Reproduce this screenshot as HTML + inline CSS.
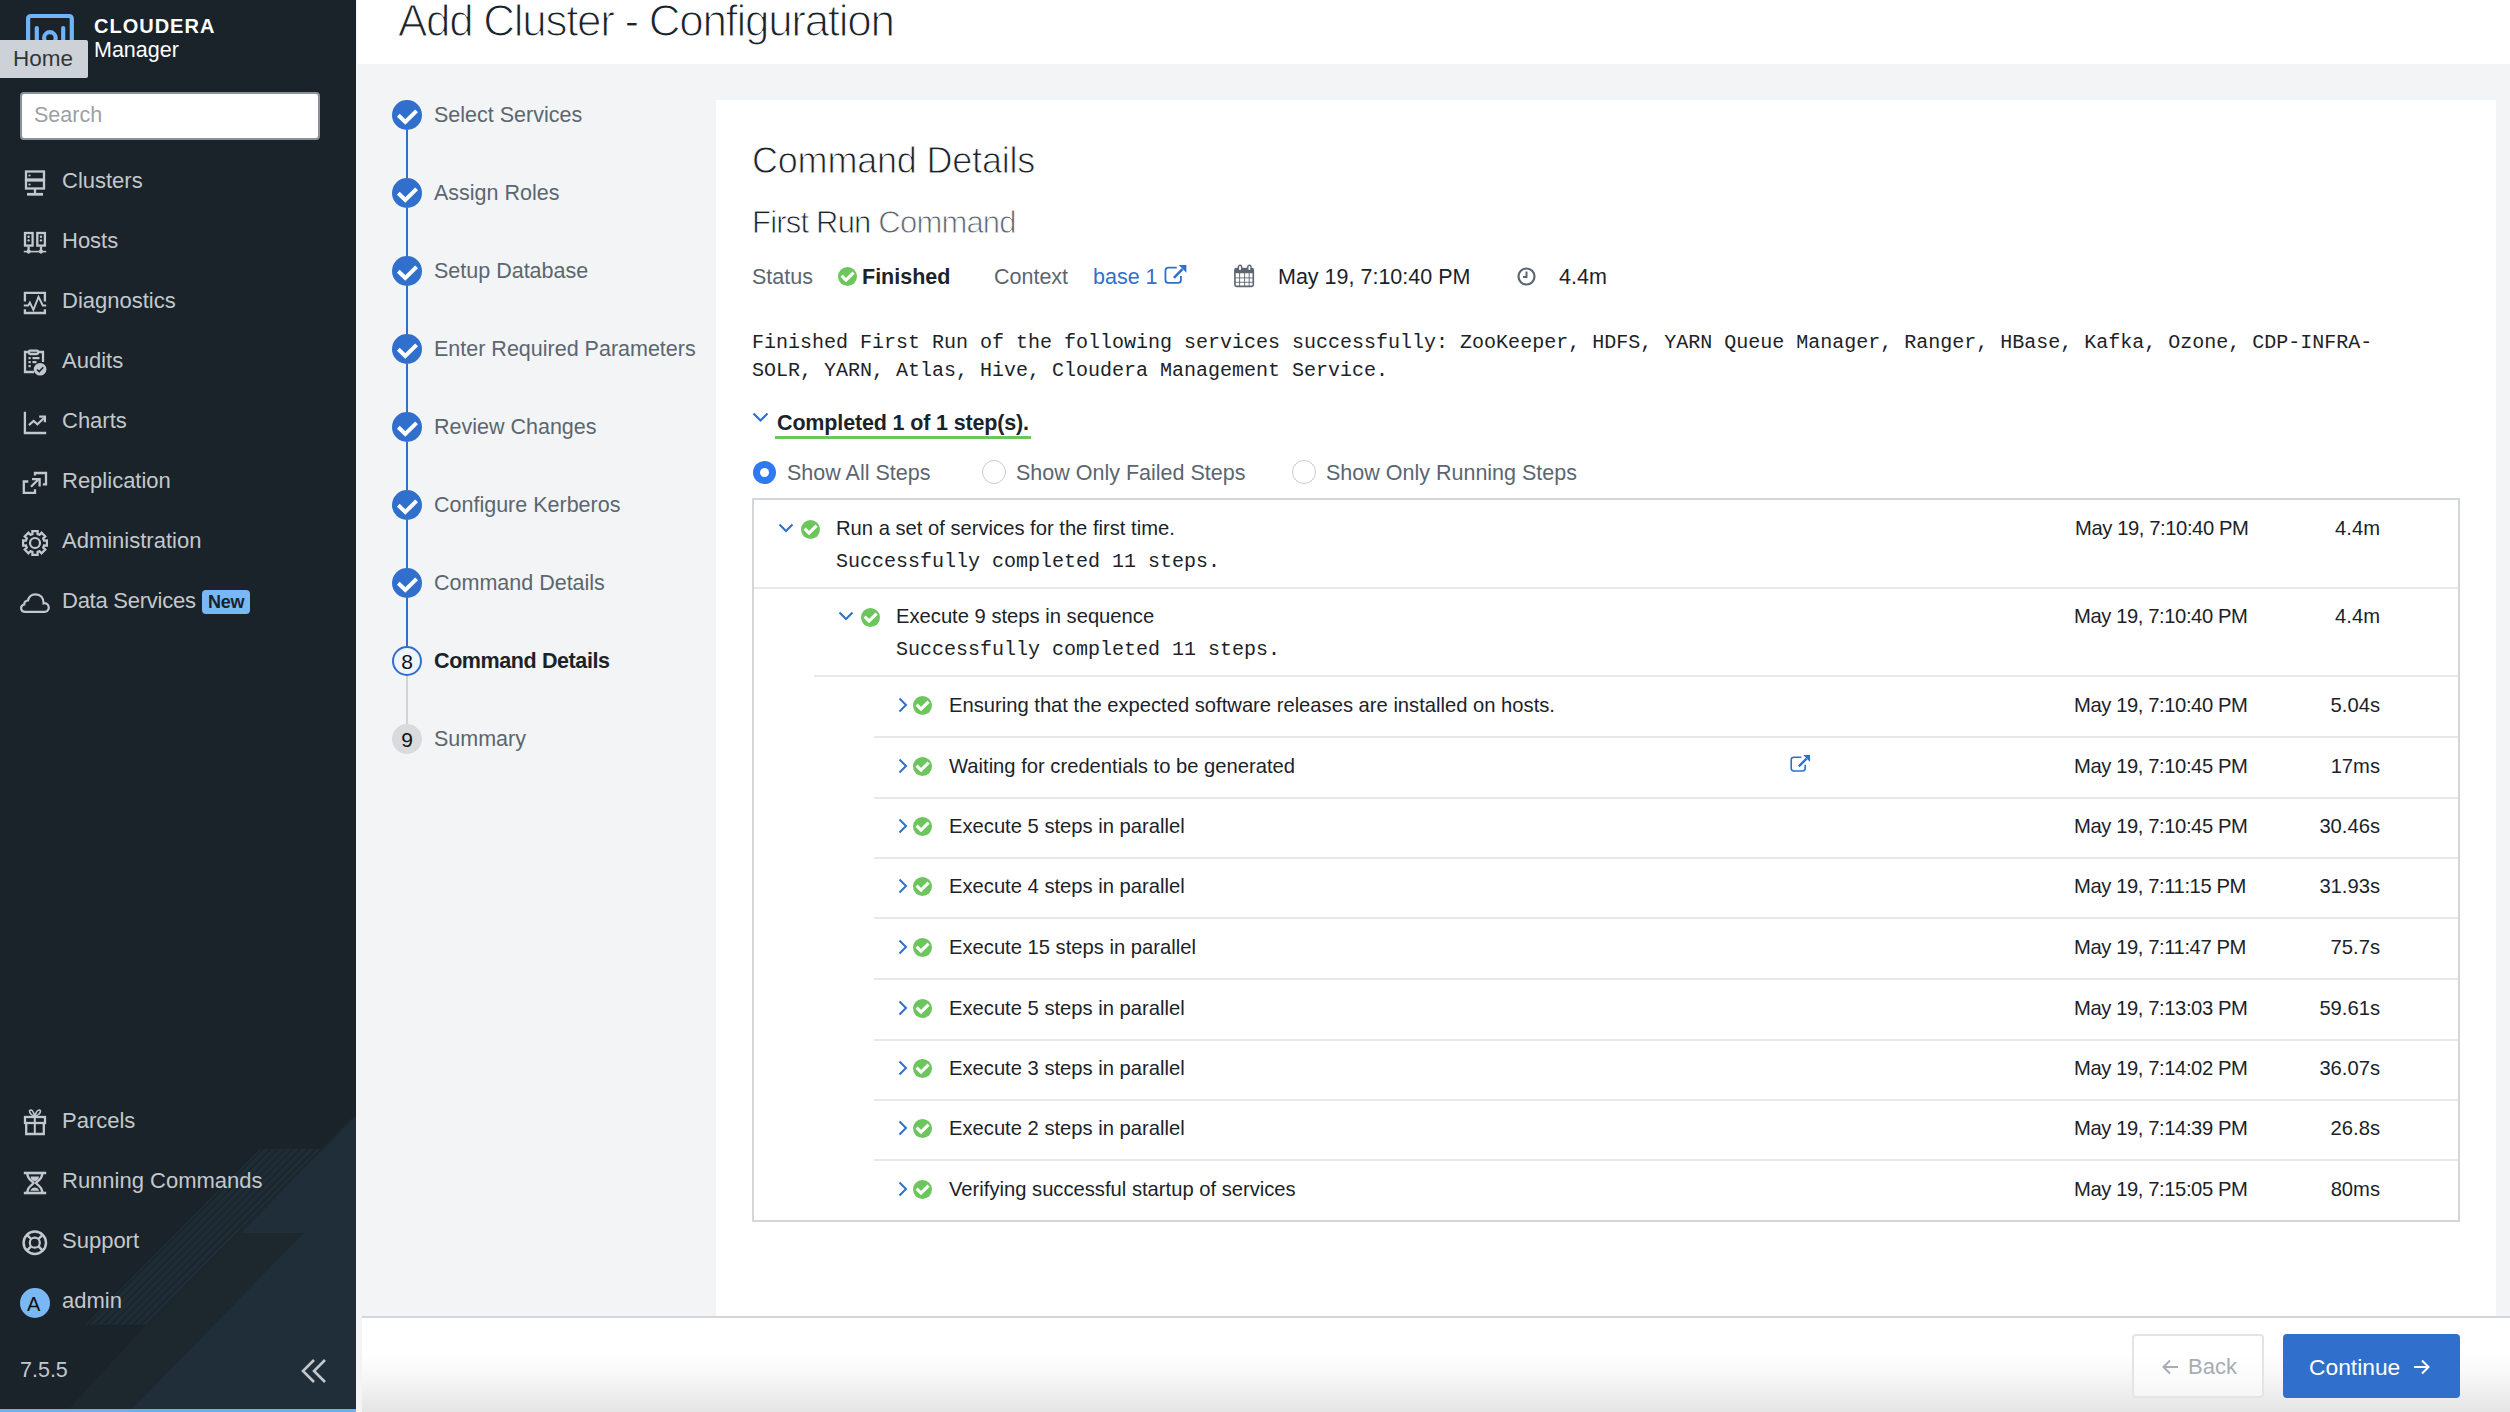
<!DOCTYPE html>
<html><head><meta charset="utf-8">
<style>
*{box-sizing:border-box;margin:0;padding:0}
html,body{width:2510px;height:1412px;overflow:hidden;background:#f3f4f5;font-family:"Liberation Sans",sans-serif;}
.p{position:absolute;white-space:nowrap;line-height:1}
#sb{position:absolute;left:0;top:0;width:356px;height:1412px;background:#1a2329;overflow:hidden}
.nt{position:absolute;left:62px;font-size:22px;color:#c3c8cd;white-space:nowrap;line-height:1}
.ic{position:absolute;overflow:visible}
.sl{position:absolute;left:434px;font-size:21.5px;color:#5b6670;white-space:nowrap;line-height:1}
.mono{font-family:"Liberation Mono",monospace;font-size:20px;color:#1b2329;white-space:nowrap;position:absolute;line-height:1}
.rt{position:absolute;font-size:20.2px;color:#1b2329;white-space:nowrap;line-height:1}
.sep{position:absolute;height:2px;background:#e6e8ea}
</style></head><body>

<div id="sb">
<svg class="ic" style="left:0;top:0" width="356" height="1412" viewBox="0 0 356 1412">
<polygon points="320.6,1149 356,1113.6 356,1412 66,1412 145.9,1324.7" fill="#1c272e"/>
<polygon points="356,1116 240.7,1232.9 303.6,1232.9 128.9,1412 356,1412" fill="#1f2e38"/>
<polygon points="259.7,1149 320.6,1149 145.9,1324.7 85,1324.7" fill="#1f2c35"/>
<g stroke="#1a242a" stroke-width="1.3">
<line x1="263" y1="1149" x2="88" y2="1324.7"/><line x1="270.5" y1="1149" x2="95.5" y2="1324.7"/><line x1="278" y1="1149" x2="103" y2="1324.7"/>
<line x1="285.5" y1="1149" x2="110.5" y2="1324.7"/><line x1="293" y1="1149" x2="118" y2="1324.7"/><line x1="300.5" y1="1149" x2="125.5" y2="1324.7"/>
<line x1="308" y1="1149" x2="133" y2="1324.7"/><line x1="315.5" y1="1149" x2="140.5" y2="1324.7"/>
</g>
</svg>
</div>
<svg class="ic" style="left:0;top:0" width="100" height="60" viewBox="0 0 100 60">
<path d="M28.1,40 V19 Q28.1,16 31.1,16 H68.8 Q71.8,16 71.8,19 V40" fill="none" stroke="#6fb3f8" stroke-width="4.2"/>
<line x1="36.8" y1="28" x2="36.8" y2="40" stroke="#6fb3f8" stroke-width="4.2" stroke-linecap="round"/>
<line x1="63.2" y1="28" x2="63.2" y2="40" stroke="#6fb3f8" stroke-width="4.2" stroke-linecap="round"/>
<circle cx="49.9" cy="38" r="5.8" fill="none" stroke="#6fb3f8" stroke-width="4.2"/>
</svg>
<div class="p" style="left:94px;top:16px;font-size:20px;font-weight:bold;color:#fff;letter-spacing:1px">CLOUDERA</div>
<div class="p" style="left:94px;top:39.5px;font-size:21.5px;color:#fff">Manager</div>
<div class="p" style="left:0;top:40px;width:88px;height:38px;background:#cdd2d8;border-radius:0 2px 2px 0"></div>
<div class="p" style="left:13px;top:48px;font-size:22.5px;color:#333638">Home</div>
<div class="p" style="left:20px;top:92px;width:300px;height:48px;background:#fff;border:2px solid #8a9198;border-radius:4px"></div>
<div class="p" style="left:34px;top:105px;font-size:21.5px;color:#9aa1a8">Search</div>
<svg class="ic" style="left:0;top:0" width="356" height="1412" viewBox="0 0 356 1412">
<g fill="none" stroke="#c3c8cd" stroke-width="2.3">
<!-- clusters -->
<rect x="26" y="171.5" width="18" height="8"/><rect x="26" y="180.5" width="18" height="8"/>
<line x1="35" y1="189" x2="35" y2="193"/><line x1="27" y1="194.3" x2="43" y2="194.3" stroke-width="2.8"/>
<!-- hosts -->
<rect x="25" y="233" width="7.6" height="12.6"/><rect x="37.3" y="233" width="7.6" height="12.6"/>
<line x1="28.6" y1="246.5" x2="28.6" y2="251"/><line x1="41" y1="246.5" x2="41" y2="251"/>
<line x1="23.8" y1="251.6" x2="46.2" y2="251.6" stroke-width="1.6"/>
<!-- diagnostics -->
<polyline points="24.9,301.4 24.9,292.9 44.9,292.9 44.9,301.4"/>
<polyline points="23.8,305.5 28.3,305.5 29.9,302.5 33.4,309.9 38.5,296.9 42.8,305.5 46.2,305.5" stroke-width="1.9"/>
<polyline points="24.9,309.3 24.9,313 44.9,313 44.9,309.3"/>
<!-- audits -->
<polyline points="28,352 25,352 25,372 34,372"/><polyline points="38,352 43,352 43,362"/>
<rect x="29" y="350.6" width="9" height="3.4" rx="1"/>
<!-- charts -->
<polyline points="24.9,411.8 24.9,433 46.2,433"/>
<polyline points="28.9,425.1 33.6,420.9 37.4,424.3 43.8,418.2" stroke-width="2.1"/>
<polyline points="39.2,416.6 44.9,416.6 44.9,422.3" stroke-width="2.3"/>
<!-- replication -->
<polyline points="28.3,481.5 23.8,481.5 23.8,492.9 35,492.9 35,489.2"/>
<polyline points="35,475.5 35,473 46,473 46,484.4 42.8,484.4"/>
<line x1="31" y1="486.8" x2="38.5" y2="479.3"/>
<polyline points="32,479.2 39.6,479.2 39.6,486.6"/>
<!-- gift -->
<rect x="25" y="1117" width="20" height="6"/><polyline points="26.2,1123 26.2,1134 43.8,1134 43.8,1123"/>
<line x1="34.8" y1="1117" x2="34.8" y2="1134" stroke-width="2"/>
<path d="M34,1116 C30,1115 28,1110 31,1110 C33,1110 34,1114 34.8,1116 C35.5,1114 36.8,1110 39,1110 C42,1110 40,1115 35.6,1116" stroke-width="1.6"/>
<!-- hourglass -->
<line x1="23.8" y1="1173" x2="46.2" y2="1173" stroke-width="2.6"/><line x1="23.8" y1="1193" x2="46.2" y2="1193" stroke-width="2.6"/>
<path d="M27.4,1174 C27.6,1179.5 32.4,1181 33.6,1183 C32.4,1185 27.6,1186.5 27.4,1192" stroke-width="2.4"/><path d="M42.2,1174 C42,1179.5 37.2,1181 36,1183 C37.2,1185 42,1186.5 42.2,1192" stroke-width="2.4"/>
<!-- support -->
<circle cx="34.8" cy="1242.7" r="11.2" stroke-width="2.5"/><circle cx="34.8" cy="1242.7" r="5" stroke-width="2.2"/>
<path d="M26.6,1234.5 L31.3,1239.2 M43,1234.5 L38.3,1239.2 M26.6,1250.9 L31.3,1246.2 M43,1250.9 L38.3,1246.2" stroke-width="2.4"/>
<!-- gear -->
<circle cx="35" cy="543" r="5" stroke-width="2.2"/>
<!-- cloud -->
<path d="M25,611.8 H45 C48.5,611.8 49.2,608 48.5,606 C47.6,603.5 45,603 43.6,603.3 C43.6,598 40.5,594.3 35.5,594.3 C31,594.3 28.5,597.5 28,600.5 C25.5,600.5 24,602.5 24.2,604.5 C21.5,605 20.8,607.5 21.2,609 C21.6,611 23,611.8 25,611.8 Z" stroke-width="2.2"/>
</g>
<g fill="#c3c8cd">
<circle cx="29.5" cy="175.5" r="1.1"/><circle cx="29.5" cy="184.5" r="1.1"/>
<circle cx="28.6" cy="236.8" r="1.2"/><circle cx="28.6" cy="240.4" r="1.2"/><circle cx="41" cy="236.8" r="1.2"/><circle cx="41" cy="240.4" r="1.2"/>
<circle cx="28.6" cy="251.6" r="2.1"/><circle cx="41" cy="251.6" r="2.1"/>
<rect x="28.5" y="357" width="2.2" height="2.2"/><rect x="28.5" y="361" width="2.2" height="2.2"/><rect x="28.5" y="365" width="2.2" height="2.2"/>
<rect x="32.5" y="357" width="7" height="2.2"/><rect x="32.5" y="361" width="4" height="2.2"/>
<circle cx="40.1" cy="369.2" r="6.3"/>
<path d="M30.6,1176.6 H39 C38.8,1179.5 37,1181 34.8,1181.4 C32.6,1181 30.8,1179.5 30.6,1176.6 Z"/>
<path d="M30.4,1190.8 C31.2,1188.4 33,1187.6 34.8,1187.6 C36.6,1187.6 38.4,1188.4 39.2,1190.8 Z"/>
</g>
<polyline points="37,369.5 39.2,371.6 43.3,367.3" fill="none" stroke="#1a2329" stroke-width="1.6"/>

<svg class="ic" style="left:0;top:0" width="356" height="700" viewBox="0 0 356 700"><path d="M43.01,538.09 L44.06,540.49 L46.91,540.34 L46.91,545.66 L44.06,545.51 L43.01,547.91 L44.14,545.19 L43.18,547.63 L45.30,549.54 L41.54,553.30 L39.63,551.18 L37.19,552.14 L39.91,551.01 L37.51,552.06 L37.66,554.91 L32.34,554.91 L32.49,552.06 L30.09,551.01 L32.81,552.14 L30.37,551.18 L28.46,553.30 L24.70,549.54 L26.82,547.63 L25.86,545.19 L26.99,547.91 L25.94,545.51 L23.09,545.66 L23.09,540.34 L25.94,540.49 L26.99,538.09 L25.86,540.81 L26.82,538.37 L24.70,536.46 L28.46,532.70 L30.37,534.82 L32.81,533.86 L30.09,534.99 L32.49,533.94 L32.34,531.09 L37.66,531.09 L37.51,533.94 L39.91,534.99 L37.19,533.86 L39.63,534.82 L41.54,532.70 L45.30,536.46 L43.18,538.37 L44.14,540.81 Z" fill="none" stroke="#c3c8cd" stroke-width="2.2" stroke-linejoin="miter"/></svg>
<div class="nt" style="top:170px">Clusters</div>
<div class="nt" style="top:230px">Hosts</div>
<div class="nt" style="top:290px">Diagnostics</div>
<div class="nt" style="top:350px">Audits</div>
<div class="nt" style="top:410px">Charts</div>
<div class="nt" style="top:470px">Replication</div>
<div class="nt" style="top:530px">Administration</div>
<div class="nt" style="top:590px;letter-spacing:-0.25px">Data Services</div>
<div class="nt" style="top:1110px">Parcels</div>
<div class="nt" style="top:1170px">Running Commands</div>
<div class="nt" style="top:1230px">Support</div>
<div class="nt" style="top:1290px">admin</div>
<div class="p" style="left:202px;top:590px;width:48px;height:24px;background:#78b8f7;border-radius:4px"></div>
<div class="p" style="left:208px;top:593px;font-size:18px;font-weight:bold;letter-spacing:-0.2px;color:#1a2329">New</div>
<div class="p" style="left:20px;top:1288px;width:30px;height:30px;border-radius:50%;background:#7ab8f5"></div>
<div class="p" style="left:27px;top:1294px;font-size:20px;color:#111">A</div>
<div class="p" style="left:20px;top:1360px;font-size:21.5px;color:#c3c8cd">7.5.5</div>
<svg class="ic" style="left:300px;top:1358px" width="28" height="26" viewBox="0 0 28 26">
<polyline points="14,2 3,13 14,24" fill="none" stroke="#c3c8cd" stroke-width="2.6"/>
<polyline points="25,2 14,13 25,24" fill="none" stroke="#c3c8cd" stroke-width="2.6"/>
</svg>
<div class="p" style="left:0;top:1409px;width:356px;height:3px;background:#6cb0f0"></div>
<div class="p" style="left:357px;top:0;width:2153px;height:64px;background:#fff"></div>
<div class="p" style="left:398px;top:-1px;font-size:44px;letter-spacing:-1.3px;color:#1b2329;-webkit-text-stroke:1.2px #fff">Add Cluster - Configuration</div>
<div class="p" style="left:392px;top:100px;width:30px;height:30px;border-radius:50%;background:#3070cc"></div>
<svg class="ic" style="left:392px;top:100px" width="30" height="30" viewBox="0 0 30 30"><polyline points="6.3,15.2 13.3,22 24.6,10.9" fill="none" stroke="#fff" stroke-width="4"/></svg>
<div class="p" style="left:406px;top:130px;width:2px;height:48px;background:#3070cc"></div>
<div class="sl" style="top:105px">Select Services</div>
<div class="p" style="left:392px;top:178px;width:30px;height:30px;border-radius:50%;background:#3070cc"></div>
<svg class="ic" style="left:392px;top:178px" width="30" height="30" viewBox="0 0 30 30"><polyline points="6.3,15.2 13.3,22 24.6,10.9" fill="none" stroke="#fff" stroke-width="4"/></svg>
<div class="p" style="left:406px;top:208px;width:2px;height:48px;background:#3070cc"></div>
<div class="sl" style="top:183px">Assign Roles</div>
<div class="p" style="left:392px;top:256px;width:30px;height:30px;border-radius:50%;background:#3070cc"></div>
<svg class="ic" style="left:392px;top:256px" width="30" height="30" viewBox="0 0 30 30"><polyline points="6.3,15.2 13.3,22 24.6,10.9" fill="none" stroke="#fff" stroke-width="4"/></svg>
<div class="p" style="left:406px;top:286px;width:2px;height:48px;background:#3070cc"></div>
<div class="sl" style="top:261px">Setup Database</div>
<div class="p" style="left:392px;top:334px;width:30px;height:30px;border-radius:50%;background:#3070cc"></div>
<svg class="ic" style="left:392px;top:334px" width="30" height="30" viewBox="0 0 30 30"><polyline points="6.3,15.2 13.3,22 24.6,10.9" fill="none" stroke="#fff" stroke-width="4"/></svg>
<div class="p" style="left:406px;top:364px;width:2px;height:48px;background:#3070cc"></div>
<div class="sl" style="top:339px">Enter Required Parameters</div>
<div class="p" style="left:392px;top:412px;width:30px;height:30px;border-radius:50%;background:#3070cc"></div>
<svg class="ic" style="left:392px;top:412px" width="30" height="30" viewBox="0 0 30 30"><polyline points="6.3,15.2 13.3,22 24.6,10.9" fill="none" stroke="#fff" stroke-width="4"/></svg>
<div class="p" style="left:406px;top:442px;width:2px;height:48px;background:#3070cc"></div>
<div class="sl" style="top:417px">Review Changes</div>
<div class="p" style="left:392px;top:490px;width:30px;height:30px;border-radius:50%;background:#3070cc"></div>
<svg class="ic" style="left:392px;top:490px" width="30" height="30" viewBox="0 0 30 30"><polyline points="6.3,15.2 13.3,22 24.6,10.9" fill="none" stroke="#fff" stroke-width="4"/></svg>
<div class="p" style="left:406px;top:520px;width:2px;height:48px;background:#3070cc"></div>
<div class="sl" style="top:495px">Configure Kerberos</div>
<div class="p" style="left:392px;top:568px;width:30px;height:30px;border-radius:50%;background:#3070cc"></div>
<svg class="ic" style="left:392px;top:568px" width="30" height="30" viewBox="0 0 30 30"><polyline points="6.3,15.2 13.3,22 24.6,10.9" fill="none" stroke="#fff" stroke-width="4"/></svg>
<div class="p" style="left:406px;top:598px;width:2px;height:48px;background:#3070cc"></div>
<div class="sl" style="top:573px">Command Details</div>
<div class="p" style="left:406px;top:676px;width:2px;height:48px;background:#d0d3d7"></div>
<div class="p" style="left:392px;top:646px;width:30px;height:30px;border-radius:50%;background:#eef5fd;border:2px solid #3070cc"></div>
<div class="p" style="left:392px;top:651px;width:30px;text-align:center;font-size:21px;color:#111">8</div>
<div class="sl" style="top:651px;font-weight:bold;letter-spacing:-0.4px;color:#1b2329">Command Details</div>
<div class="p" style="left:392px;top:724px;width:30px;height:30px;border-radius:50%;background:#d8dadd"></div>
<div class="p" style="left:392px;top:729px;width:30px;text-align:center;font-size:21px;color:#111">9</div>
<div class="sl" style="top:729px">Summary</div>
<div class="p" style="left:716px;top:100px;width:1780px;height:1216px;background:#fff"></div>
<div class="p" style="left:752px;top:142.5px;font-size:36px;letter-spacing:-0.2px;color:#1b2329;-webkit-text-stroke:0.9px #fff">Command Details</div>
<div class="p" style="left:752px;top:206.5px;font-size:31px;letter-spacing:-0.8px;color:#1b2329;-webkit-text-stroke:0.8px #fff">First Run <span style="color:#5b6670">Command</span></div>
<div class="p" style="left:752px;top:267px;font-size:21.5px;color:#5b6670">Status</div>
<svg class="ic" style="left:838px;top:267px" width="19" height="19" viewBox="0 0 19 19"><circle cx="9.5" cy="9.5" r="9.5" fill="#6cc55d"/><polyline points="3.6,8.6 8,13 15.6,5.6" fill="none" stroke="#fff" stroke-width="3.1"/></svg>
<div class="p" style="left:862px;top:267px;font-size:21.5px;font-weight:bold;color:#1b2329">Finished</div>
<div class="p" style="left:994px;top:267px;font-size:21.5px;color:#5b6670">Context</div>
<div class="p" style="left:1093px;top:267px;font-size:21.5px;color:#3070cc">base 1</div>
<svg class="ic" style="left:1163px;top:264px" width="25.0" height="25.0" viewBox="0 0 25 25"><path d="M13.8,3.55 H5.4 Q2.45,3.55 2.45,6.5 V15.9 Q2.45,18.85 5.4,18.85 H15 Q17.95,18.85 17.95,15.9 V12" fill="none" stroke="#3070cc" stroke-width="1.8"/><path d="M10.9,13.8 L19.5,5.2" stroke="#3070cc" stroke-width="2.6"/><polygon points="15.8,1 23.4,1 23.4,8.8" fill="#3070cc"/></svg>
<svg class="ic" style="left:1234px;top:264px" width="21" height="24" viewBox="0 0 21 24">
<rect x="0.9" y="4.6" width="18.4" height="17.8" rx="1.6" fill="none" stroke="#5b6670" stroke-width="1.6"/>
<rect x="0.9" y="4.6" width="18.4" height="4.6" rx="1" fill="#5b6670"/>
<rect x="4.4" y="1.2" width="3.2" height="5.6" rx="1.6" fill="#fff" stroke="#5b6670" stroke-width="1.4"/>
<rect x="13.8" y="1.2" width="3.2" height="5.6" rx="1.6" fill="#fff" stroke="#5b6670" stroke-width="1.4"/>
<path d="M1,13.9H19.2M1,18.3H19.2M5.6,9V22.3M10.6,9V22.3M15.2,9V22.3" stroke="#5b6670" stroke-width="0.9"/>
</svg>
<div class="p" style="left:1278px;top:267px;font-size:21.5px;color:#1b2329">May 19, 7:10:40 PM</div>
<svg class="ic" style="left:1517px;top:267px" width="19" height="19" viewBox="0 0 19 19">
<circle cx="9.5" cy="9.5" r="8" fill="none" stroke="#5b6670" stroke-width="2.2"/>
<polyline points="9.5,4.5 9.5,10 6,10" fill="none" stroke="#5b6670" stroke-width="2"/>
</svg>
<div class="p" style="left:1559px;top:267px;font-size:21.5px;color:#1b2329">4.4m</div>
<div class="mono" style="left:752px;top:333px">Finished First Run of the following services successfully: ZooKeeper, HDFS, YARN Queue Manager, Ranger, HBase, Kafka, Ozone, CDP-INFRA-</div>
<div class="mono" style="left:752px;top:361px">SOLR, YARN, Atlas, Hive, Cloudera Management Service.</div>
<svg class="ic" style="left:752px;top:412px" width="17" height="11" viewBox="0 0 17 11"><polyline points="1.5,1.5 8.5,8.5 15.5,1.5" fill="none" stroke="#3070cc" stroke-width="2.2"/></svg>
<div class="p" style="left:777px;top:413px;font-size:21.5px;font-weight:bold;letter-spacing:-0.15px;color:#1b2329">Completed 1 of 1 step(s).</div>
<div class="p" style="left:775px;top:435.5px;width:256px;height:3px;background:#6cc55d"></div>
<div class="p" style="left:753px;top:461px;width:23px;height:23px;border-radius:50%;background:#2f7af0"></div>
<div class="p" style="left:760px;top:468px;width:9px;height:9px;border-radius:50%;background:#fff"></div>
<div class="p" style="left:787px;top:463px;font-size:21.5px;color:#5b6670">Show All Steps</div>
<div class="p" style="left:982px;top:460px;width:24px;height:24px;border-radius:50%;background:#fff;border:1.5px solid #c9cacc"></div>
<div class="p" style="left:1016px;top:463px;font-size:21.5px;color:#5b6670">Show Only Failed Steps</div>
<div class="p" style="left:1292px;top:460px;width:24px;height:24px;border-radius:50%;background:#fff;border:1.5px solid #c9cacc"></div>
<div class="p" style="left:1326px;top:463px;font-size:21.5px;color:#5b6670">Show Only Running Steps</div>
<div class="p" style="left:752px;top:498px;width:1708px;height:724px;border:2px solid #d3d6da"></div>
<svg class="ic" style="left:778px;top:523px" width="16" height="10" viewBox="0 0 16 10"><polyline points="1.5,1.5 8,8 14.5,1.5" fill="none" stroke="#3070cc" stroke-width="2"/></svg>
<svg class="ic" style="left:801px;top:520px" width="19" height="19" viewBox="0 0 19 19"><circle cx="9.5" cy="9.5" r="9.5" fill="#6cc55d"/><polyline points="3.6,8.6 8,13 15.6,5.6" fill="none" stroke="#fff" stroke-width="3.1"/></svg>
<div class="rt" style="left:836px;top:518px">Run a set of services for the first time.</div>
<div class="mono" style="left:836px;top:552px">Successfully completed 11 steps.</div>
<div class="rt" style="left:2075px;top:518px;letter-spacing:-0.4px">May 19, 7:10:40 PM</div>
<div class="rt" style="left:2180px;top:518px;width:200px;text-align:right">4.4m</div>
<div class="sep" style="left:754px;top:587px;width:1704px"></div>
<svg class="ic" style="left:838px;top:611px" width="16" height="10" viewBox="0 0 16 10"><polyline points="1.5,1.5 8,8 14.5,1.5" fill="none" stroke="#3070cc" stroke-width="2"/></svg>
<svg class="ic" style="left:861px;top:608px" width="19" height="19" viewBox="0 0 19 19"><circle cx="9.5" cy="9.5" r="9.5" fill="#6cc55d"/><polyline points="3.6,8.6 8,13 15.6,5.6" fill="none" stroke="#fff" stroke-width="3.1"/></svg>
<div class="rt" style="left:896px;top:606px">Execute 9 steps in sequence</div>
<div class="mono" style="left:896px;top:640px">Successfully completed 11 steps.</div>
<div class="rt" style="left:2074px;top:606px;letter-spacing:-0.4px">May 19, 7:10:40 PM</div>
<div class="rt" style="left:2180px;top:606px;width:200px;text-align:right">4.4m</div>
<div class="sep" style="left:814px;top:675px;width:1644px"></div>
<svg class="ic" style="left:897.5px;top:697px" width="10" height="16" viewBox="0 0 10 16"><polyline points="1.5,1.5 8,8 1.5,14.5" fill="none" stroke="#3070cc" stroke-width="2"/></svg>
<svg class="ic" style="left:913px;top:696px" width="19" height="19" viewBox="0 0 19 19"><circle cx="9.5" cy="9.5" r="9.5" fill="#6cc55d"/><polyline points="3.6,8.6 8,13 15.6,5.6" fill="none" stroke="#fff" stroke-width="3.1"/></svg>
<div class="rt" style="left:949px;top:695px">Ensuring that the expected software releases are installed on hosts.</div>
<div class="rt" style="left:2074px;top:695px;letter-spacing:-0.4px">May 19, 7:10:40 PM</div>
<div class="rt" style="left:2180px;top:695px;width:200px;text-align:right">5.04s</div>
<div class="sep" style="left:874px;top:736px;width:1584px"></div>
<svg class="ic" style="left:897.5px;top:758px" width="10" height="16" viewBox="0 0 10 16"><polyline points="1.5,1.5 8,8 1.5,14.5" fill="none" stroke="#3070cc" stroke-width="2"/></svg>
<svg class="ic" style="left:913px;top:757px" width="19" height="19" viewBox="0 0 19 19"><circle cx="9.5" cy="9.5" r="9.5" fill="#6cc55d"/><polyline points="3.6,8.6 8,13 15.6,5.6" fill="none" stroke="#fff" stroke-width="3.1"/></svg>
<div class="rt" style="left:949px;top:756px">Waiting for credentials to be generated</div>
<div class="rt" style="left:2074px;top:756px;letter-spacing:-0.4px">May 19, 7:10:45 PM</div>
<div class="rt" style="left:2180px;top:756px;width:200px;text-align:right">17ms</div>
<div class="sep" style="left:874px;top:797px;width:1584px"></div>
<svg class="ic" style="left:1788.6px;top:753.9px" width="22.5" height="22.5" viewBox="0 0 25 25"><path d="M13.8,3.55 H5.4 Q2.45,3.55 2.45,6.5 V15.9 Q2.45,18.85 5.4,18.85 H15 Q17.95,18.85 17.95,15.9 V12" fill="none" stroke="#3070cc" stroke-width="1.8"/><path d="M10.9,13.8 L19.5,5.2" stroke="#3070cc" stroke-width="2.6"/><polygon points="15.8,1 23.4,1 23.4,8.8" fill="#3070cc"/></svg>
<svg class="ic" style="left:897.5px;top:818px" width="10" height="16" viewBox="0 0 10 16"><polyline points="1.5,1.5 8,8 1.5,14.5" fill="none" stroke="#3070cc" stroke-width="2"/></svg>
<svg class="ic" style="left:913px;top:817px" width="19" height="19" viewBox="0 0 19 19"><circle cx="9.5" cy="9.5" r="9.5" fill="#6cc55d"/><polyline points="3.6,8.6 8,13 15.6,5.6" fill="none" stroke="#fff" stroke-width="3.1"/></svg>
<div class="rt" style="left:949px;top:816px">Execute 5 steps in parallel</div>
<div class="rt" style="left:2074px;top:816px;letter-spacing:-0.4px">May 19, 7:10:45 PM</div>
<div class="rt" style="left:2180px;top:816px;width:200px;text-align:right">30.46s</div>
<div class="sep" style="left:874px;top:857px;width:1584px"></div>
<svg class="ic" style="left:897.5px;top:878px" width="10" height="16" viewBox="0 0 10 16"><polyline points="1.5,1.5 8,8 1.5,14.5" fill="none" stroke="#3070cc" stroke-width="2"/></svg>
<svg class="ic" style="left:913px;top:877px" width="19" height="19" viewBox="0 0 19 19"><circle cx="9.5" cy="9.5" r="9.5" fill="#6cc55d"/><polyline points="3.6,8.6 8,13 15.6,5.6" fill="none" stroke="#fff" stroke-width="3.1"/></svg>
<div class="rt" style="left:949px;top:876px">Execute 4 steps in parallel</div>
<div class="rt" style="left:2074px;top:876px;letter-spacing:-0.4px">May 19, 7:11:15 PM</div>
<div class="rt" style="left:2180px;top:876px;width:200px;text-align:right">31.93s</div>
<div class="sep" style="left:874px;top:917px;width:1584px"></div>
<svg class="ic" style="left:897.5px;top:939px" width="10" height="16" viewBox="0 0 10 16"><polyline points="1.5,1.5 8,8 1.5,14.5" fill="none" stroke="#3070cc" stroke-width="2"/></svg>
<svg class="ic" style="left:913px;top:938px" width="19" height="19" viewBox="0 0 19 19"><circle cx="9.5" cy="9.5" r="9.5" fill="#6cc55d"/><polyline points="3.6,8.6 8,13 15.6,5.6" fill="none" stroke="#fff" stroke-width="3.1"/></svg>
<div class="rt" style="left:949px;top:937px">Execute 15 steps in parallel</div>
<div class="rt" style="left:2074px;top:937px;letter-spacing:-0.4px">May 19, 7:11:47 PM</div>
<div class="rt" style="left:2180px;top:937px;width:200px;text-align:right">75.7s</div>
<div class="sep" style="left:874px;top:978px;width:1584px"></div>
<svg class="ic" style="left:897.5px;top:1000px" width="10" height="16" viewBox="0 0 10 16"><polyline points="1.5,1.5 8,8 1.5,14.5" fill="none" stroke="#3070cc" stroke-width="2"/></svg>
<svg class="ic" style="left:913px;top:999px" width="19" height="19" viewBox="0 0 19 19"><circle cx="9.5" cy="9.5" r="9.5" fill="#6cc55d"/><polyline points="3.6,8.6 8,13 15.6,5.6" fill="none" stroke="#fff" stroke-width="3.1"/></svg>
<div class="rt" style="left:949px;top:998px">Execute 5 steps in parallel</div>
<div class="rt" style="left:2074px;top:998px;letter-spacing:-0.4px">May 19, 7:13:03 PM</div>
<div class="rt" style="left:2180px;top:998px;width:200px;text-align:right">59.61s</div>
<div class="sep" style="left:874px;top:1039px;width:1584px"></div>
<svg class="ic" style="left:897.5px;top:1060px" width="10" height="16" viewBox="0 0 10 16"><polyline points="1.5,1.5 8,8 1.5,14.5" fill="none" stroke="#3070cc" stroke-width="2"/></svg>
<svg class="ic" style="left:913px;top:1059px" width="19" height="19" viewBox="0 0 19 19"><circle cx="9.5" cy="9.5" r="9.5" fill="#6cc55d"/><polyline points="3.6,8.6 8,13 15.6,5.6" fill="none" stroke="#fff" stroke-width="3.1"/></svg>
<div class="rt" style="left:949px;top:1058px">Execute 3 steps in parallel</div>
<div class="rt" style="left:2074px;top:1058px;letter-spacing:-0.4px">May 19, 7:14:02 PM</div>
<div class="rt" style="left:2180px;top:1058px;width:200px;text-align:right">36.07s</div>
<div class="sep" style="left:874px;top:1099px;width:1584px"></div>
<svg class="ic" style="left:897.5px;top:1120px" width="10" height="16" viewBox="0 0 10 16"><polyline points="1.5,1.5 8,8 1.5,14.5" fill="none" stroke="#3070cc" stroke-width="2"/></svg>
<svg class="ic" style="left:913px;top:1119px" width="19" height="19" viewBox="0 0 19 19"><circle cx="9.5" cy="9.5" r="9.5" fill="#6cc55d"/><polyline points="3.6,8.6 8,13 15.6,5.6" fill="none" stroke="#fff" stroke-width="3.1"/></svg>
<div class="rt" style="left:949px;top:1118px">Execute 2 steps in parallel</div>
<div class="rt" style="left:2074px;top:1118px;letter-spacing:-0.4px">May 19, 7:14:39 PM</div>
<div class="rt" style="left:2180px;top:1118px;width:200px;text-align:right">26.8s</div>
<div class="sep" style="left:874px;top:1159px;width:1584px"></div>
<svg class="ic" style="left:897.5px;top:1181px" width="10" height="16" viewBox="0 0 10 16"><polyline points="1.5,1.5 8,8 1.5,14.5" fill="none" stroke="#3070cc" stroke-width="2"/></svg>
<svg class="ic" style="left:913px;top:1180px" width="19" height="19" viewBox="0 0 19 19"><circle cx="9.5" cy="9.5" r="9.5" fill="#6cc55d"/><polyline points="3.6,8.6 8,13 15.6,5.6" fill="none" stroke="#fff" stroke-width="3.1"/></svg>
<div class="rt" style="left:949px;top:1179px">Verifying successful startup of services</div>
<div class="rt" style="left:2074px;top:1179px;letter-spacing:-0.4px">May 19, 7:15:05 PM</div>
<div class="rt" style="left:2180px;top:1179px;width:200px;text-align:right">80ms</div>
<div class="p" style="left:362px;top:1316px;width:2148px;height:96px;border-top:2px solid #d3d6da;background:linear-gradient(#fff 0%,#fff 38%,#f7f7f7 62%,#ececed 85%,#e5e5e6 100%)"></div>
<div class="p" style="left:2132px;top:1334px;width:132px;height:64px;border:2px solid #e2e4e6;border-radius:4px;background:rgba(255,255,255,0.5)"></div>
<div class="p" style="left:2188px;top:1356px;font-size:22px;color:#a7adb3">Back</div>
<svg class="ic" style="left:2161px;top:1358px" width="18" height="18" viewBox="0 0 18 18"><path d="M17,9 H2.5 M9,2.5 L2.5,9 L9,15.5" fill="none" stroke="#a7adb3" stroke-width="2"/></svg>
<div class="p" style="left:2283px;top:1334px;width:177px;height:64px;border-radius:4px;background:#3070cc"></div>
<div class="p" style="left:2309px;top:1356px;font-size:22.8px;color:#fff">Continue</div>
<svg class="ic" style="left:2413px;top:1358px" width="18" height="18" viewBox="0 0 18 18"><path d="M1,9 H15.5 M9,2.5 L15.5,9 L9,15.5" fill="none" stroke="#fff" stroke-width="2"/></svg>
</body></html>
